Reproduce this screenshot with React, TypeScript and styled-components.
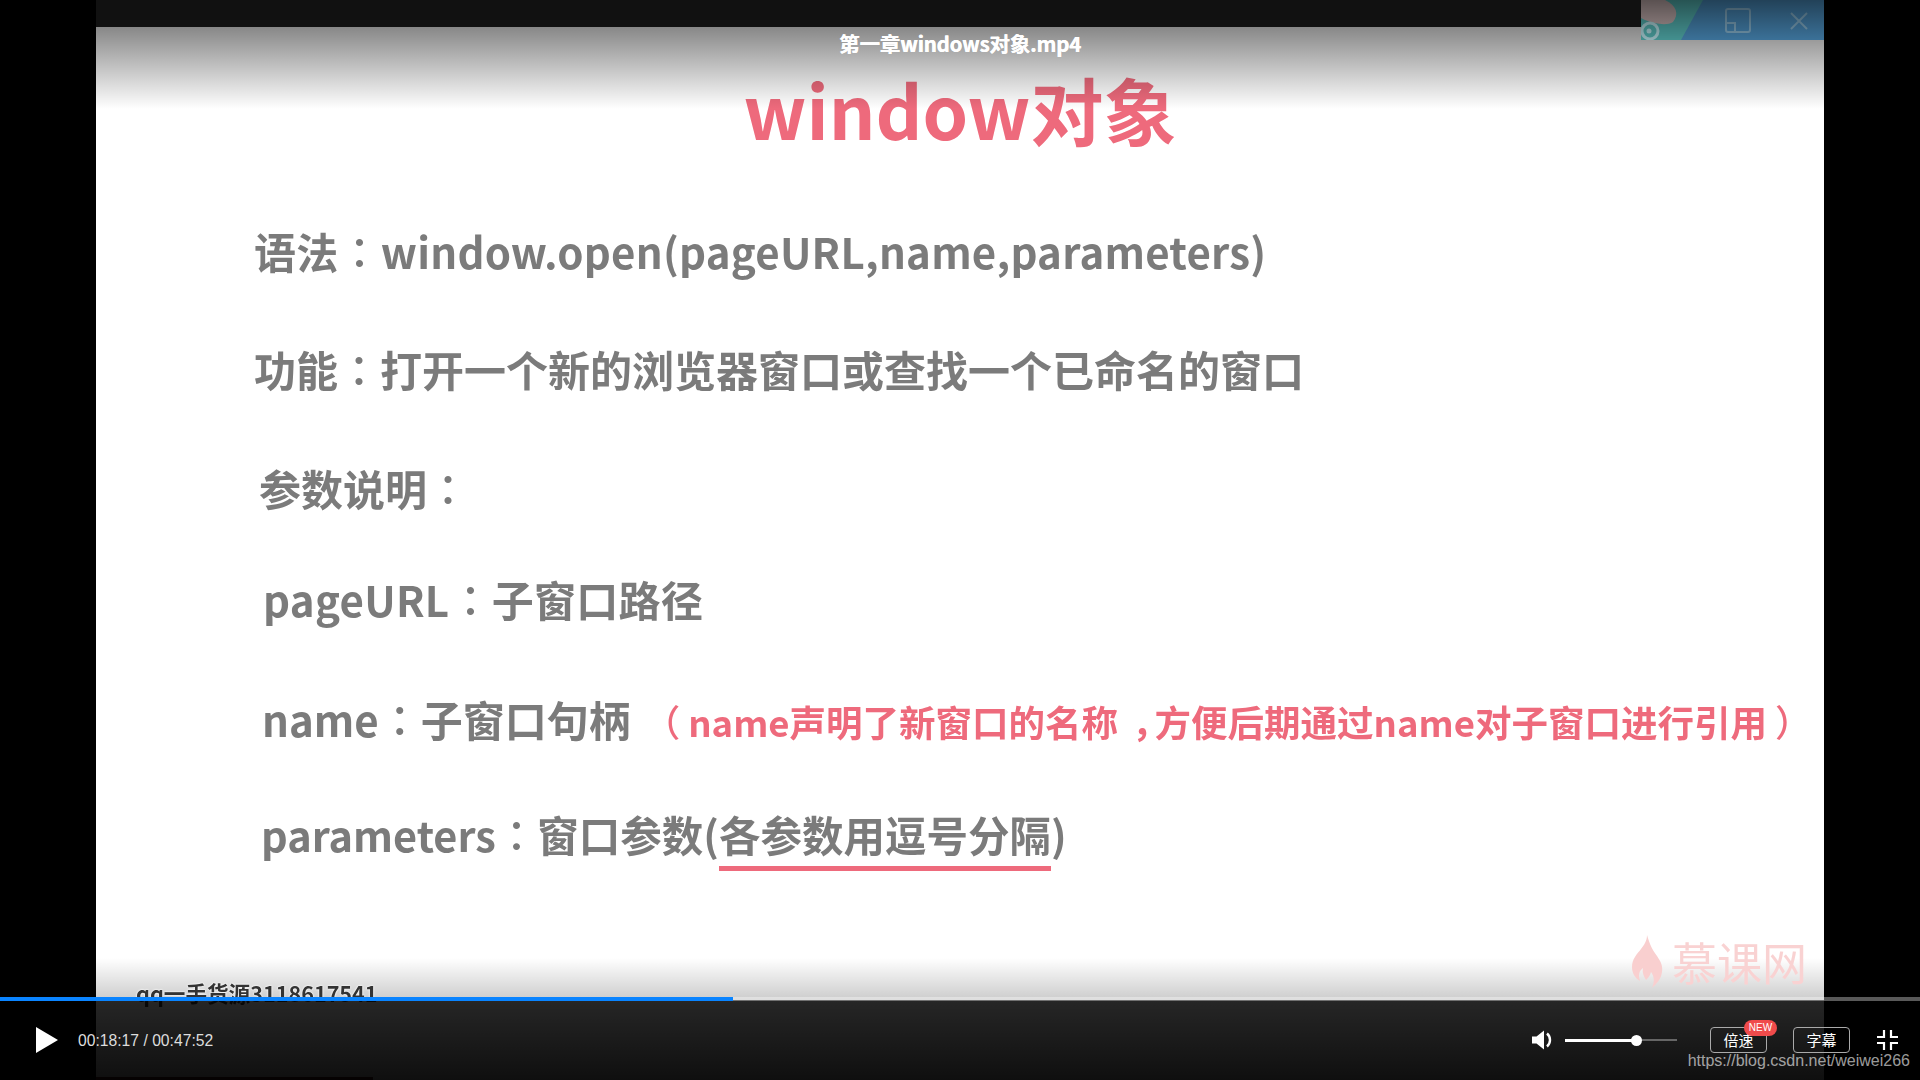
import React from "react";
import styled, { createGlobalStyle } from "styled-components";

const GlobalStyle = createGlobalStyle`
  html, body {
    margin: 0;
    padding: 0;
    background: #000;
  }
  * {
    box-sizing: border-box;
  }
`;

const CJK = `"Noto Sans CJK SC", "Noto Sans", sans-serif`;
const PINK = "#ee6a7c";

const CURRENT_SEC = 18 * 60 + 17;
const TOTAL_SEC = 47 * 60 + 52;
const VOLUME = 0.64;

const Player = styled.div`
  position: relative;
  width: 1920px;
  height: 1080px;
  overflow: hidden;
  background: #000;
  display: flex;
  justify-content: center;
  font-family: ${CJK};
`;

const Slide = styled.main`
  position: relative;
  width: 1728px;
  height: 1080px;
  background: #fff;
  display: flex;
  flex-direction: column;
`;

const TopStrip = styled.div`
  height: 27px;
  flex: none;
  background: #111;
`;

const Content = styled.div`
  flex: 1;
  display: flex;
  flex-direction: column;
  filter: blur(0.55px);
`;

const SlideTitle = styled.h1`
  margin: 46px 0 0;
  font-size: 73px;
  line-height: 70px;
  font-weight: 700;
  color: ${PINK};
  text-align: center;
`;

const Row = styled.div<{
  $indent: number;
  $top: number;
  $size?: number;
  $tracking?: number;
}>`
  margin: ${(p) => p.$top}px 0 0 ${(p) => p.$indent}px;
  height: 60px;
  font-size: ${(p) => p.$size ?? 42}px;
  letter-spacing: ${(p) => p.$tracking ?? 0}px;
  line-height: 60px;
  font-weight: 700;
  color: #7b7b7b;
  white-space: nowrap;
`;

const Punct = styled.span`
  font-family: "Noto Sans CJK TC", sans-serif;
  font-weight: 500;
`;

const Paren = styled(Punct)<{ $side: "open" | "close" }>`
  margin: ${(p) => (p.$side === "open" ? "0 8px 0 0" : "0 0 0 8px")};
`;

const Comma = styled.span`
  padding-left: 14px;
  letter-spacing: -14px;
`;

const Note = styled.span`
  margin-left: 13px;
  font-size: 36.5px;
  color: ${PINK};
`;

const Marked = styled.span`
  padding-bottom: 2px;
  border-bottom: 5px solid ${PINK};
`;

const TopShade = styled.div`
  position: absolute;
  left: 0;
  right: 0;
  top: 27px;
  height: 82px;
  background: linear-gradient(rgba(0, 0, 0, 0.47), rgba(0, 0, 0, 0));
`;

const BottomShade = styled.div`
  position: absolute;
  left: 0;
  right: 0;
  top: 958px;
  height: 42px;
  background: linear-gradient(rgba(0, 0, 0, 0), rgba(0, 0, 0, 0.2));
`;

const VideoTitle = styled.div`
  position: absolute;
  left: 0;
  right: 0;
  top: 29px;
  text-align: center;
  font-size: 20.5px;
  line-height: 28px;
  font-weight: 700;
  letter-spacing: -0.2px;
  color: #fff;
  text-shadow: 0.4px 0 #fff;
`;

const WindowChrome = styled.div`
  position: absolute;
  top: 0;
  right: 0;
  width: 183px;
  height: 40px;
`;

const QqMark = styled.div`
  position: absolute;
  left: 40px;
  top: 978px;
  font-size: 21.6px;
  line-height: 30px;
  font-weight: 700;
  color: #333;
  white-space: nowrap;
  text-shadow: 0 0 2px #fff, 0 0 2px #fff;
  filter: blur(0.5px);
`;

const BrandMark = styled.div`
  position: absolute;
  right: 17px;
  top: 935px;
  display: flex;
  align-items: center;
  gap: 9px;
  filter: blur(0.6px);
`;

const BrandText = styled.span`
  font-size: 45px;
  line-height: 53px;
  color: #f9d2d2;
  white-space: nowrap;
`;

const StripeEdge = styled.div`
  position: absolute;
  left: 0;
  bottom: 0;
  width: 277px;
  height: 3px;
  background: #5a1a1a;
`;

const ControlBar = styled.footer`
  position: absolute;
  left: 0;
  right: 0;
  bottom: 0;
  height: 80px;
  display: flex;
  align-items: center;
  justify-content: space-between;
  padding: 0 22px 0 36px;
  background: linear-gradient(rgba(0, 0, 0, 0.85), rgba(0, 0, 0, 0.94));
`;

const Track = styled.div`
  position: absolute;
  left: 0;
  right: 0;
  top: -3px;
  height: 4px;
  background: rgba(255, 255, 255, 0.35);
`;

const Played = styled.div`
  height: 100%;
  background: #0a84ff;
`;

const LeftControls = styled.div`
  display: flex;
  align-items: center;
  gap: 20px;
`;

const RightControls = styled.div`
  display: flex;
  align-items: center;
`;

const IconButton = styled.button`
  display: flex;
  padding: 0;
  border: 0;
  background: none;
  cursor: pointer;
`;

const TimeText = styled.span`
  position: relative;
  top: 1px;
  font-family: "Liberation Sans", Arial, sans-serif;
  font-size: 15.7px;
  color: #ddd;
  white-space: nowrap;
`;

const VolumeSlider = styled.div`
  position: relative;
  width: 112px;
  height: 2px;
  margin: 0 33px 0 12px;
  background: #666;
`;

const VolumeFill = styled.div`
  position: relative;
  height: 3px;
  top: -0.5px;
  background: #fff;

  &::after {
    content: "";
    position: absolute;
    right: -5px;
    top: -4px;
    width: 11px;
    height: 11px;
    border-radius: 50%;
    background: #fff;
  }
`;

const PillGroup = styled.div`
  display: flex;
  gap: 26px;
  margin-right: 27px;
`;

const PillButton = styled.button`
  position: relative;
  width: 57px;
  height: 26px;
  padding: 0;
  border: 1px solid #aaa;
  border-radius: 4px;
  background: none;
  color: #fff;
  font-family: ${CJK};
  font-size: 15px;
  line-height: 22px;
  cursor: pointer;
`;

const NewBadge = styled.span`
  position: absolute;
  right: -11px;
  top: -8px;
  width: 33px;
  height: 16px;
  border-radius: 8px;
  background: #f04b4b;
  color: #fff;
  font-family: "Liberation Sans", Arial, sans-serif;
  font-size: 10px;
  line-height: 16px;
  text-align: center;
`;

const UrlMark = styled.div`
  position: absolute;
  right: 10px;
  top: 1051px;
  font-family: "Liberation Sans", Arial, sans-serif;
  font-size: 16px;
  line-height: 20px;
  color: rgba(255, 255, 255, 0.62);
  white-space: nowrap;
`;

const ChromeArt = () => (
  <svg width="183" height="40" viewBox="0 0 183 40">
    <defs>
      <linearGradient id="chromeDim" x1="0" y1="0" x2="0" y2="1">
        <stop offset="0" stopColor="#000" stopOpacity="0.42" />
        <stop offset="1" stopColor="#000" stopOpacity="0" />
      </linearGradient>
    </defs>
    <rect width="183" height="40" fill="#3b7198" />
    <path d="M0 0H62L40 40H0Z" fill="#43908f" />
    <path d="M0 0H24C36 6 38 14 32 22C26 26 14 24 4 20L0 18Z" fill="#9c8c8c" />
    <circle cx="9" cy="31" r="8" fill="none" stroke="#8fb0b5" strokeWidth="3" />
    <circle cx="8" cy="31" r="2.5" fill="#8fb0b5" />
    <g fill="none" stroke="#6b8fa4" strokeWidth="2">
      <rect x="85" y="9" width="24" height="23" rx="2" />
      <path d="M85 23H94V32" />
      <path d="M150 13L166 29M166 13L150 29" />
    </g>
    <rect width="183" height="40" fill="url(#chromeDim)" />
  </svg>
);

const Flame = () => (
  <svg width="31" height="53" viewBox="0 0 31 53">
    <path
      d="M15 0C18 10 20 14 25 21C29 27 31 31 30 37C29 45 24 49 20 53C23 46 22 41 19 37C18 41 16 43 14 45C12 41 10 38 11 33C7 36 6 40 8 46C3 43 0 38 0 32C0 24 5 19 9 14C12 10 15 6 15 0Z"
      fill="#f9cfcf"
    />
  </svg>
);

const PlayIcon = () => (
  <svg width="22" height="26" viewBox="0 0 22 26">
    <path d="M0 0L22 13L0 26Z" fill="#fff" />
  </svg>
);

const VolumeIcon = () => (
  <svg width="21" height="20" viewBox="0 0 21 20">
    <path d="M0 6.5H4.5L12 0.5V19.5L4.5 13.5H0Z" fill="#fff" />
    <path d="M15 3.5C19 7 19 13 15 16.5" fill="none" stroke="#fff" strokeWidth="2.4" />
  </svg>
);

const ExitFullscreenIcon = () => (
  <svg width="21" height="20" viewBox="0 0 21 20">
    <path
      d="M7 0V7H0M14 0V7H21M7 20V13H0M14 20V13H21"
      fill="none"
      stroke="#fff"
      strokeWidth="2.2"
    />
  </svg>
);

const Colon = () => <Punct>：</Punct>;

const App = () => {
  const played = (CURRENT_SEC / TOTAL_SEC) * 100;

  return (
    <Player>
      <GlobalStyle />
      <Slide>
        <TopStrip />
        <Content>
          <SlideTitle>window对象</SlideTitle>
          <Row $indent={158} $top={78} $tracking={0.24}>
            语法<Colon />window.open(pageURL,name,parameters)
          </Row>
          <Row $indent={158} $top={58}>
            功能<Colon />打开一个新的浏览器窗口或查找一个已命名的窗口
          </Row>
          <Row $indent={163} $top={59}>
            参数说明<Colon />
          </Row>
          <Row $indent={167} $top={51} $tracking={0.3}>
            pageURL<Colon />子窗口路径
          </Row>
          <Row $indent={166} $top={60}>
            name<Colon />子窗口句柄
            <Note>
              <Paren $side="open">（</Paren>name声明了新窗口的名称<Comma>，</Comma>
              方便后期通过name对子窗口进行引用<Paren $side="close">）</Paren>
            </Note>
          </Row>
          <Row $indent={165} $top={55} $size={41.5}>
            parameters<Colon />窗口参数(<Marked>各参数用逗号分隔</Marked>)
          </Row>
        </Content>
        <TopShade />
        <BottomShade />
        <VideoTitle>第一章windows对象.mp4</VideoTitle>
        <WindowChrome>
          <ChromeArt />
        </WindowChrome>
        <QqMark>qq一手货源3118617541</QqMark>
        <BrandMark>
          <Flame />
          <BrandText>慕课网</BrandText>
        </BrandMark>
        <StripeEdge />
      </Slide>
      <ControlBar>
        <Track>
          <Played style={{ width: `${played}%` }} />
        </Track>
        <LeftControls>
          <IconButton aria-label="play">
            <PlayIcon />
          </IconButton>
          <TimeText>00:18:17 / 00:47:52</TimeText>
        </LeftControls>
        <RightControls>
          <IconButton aria-label="volume">
            <VolumeIcon />
          </IconButton>
          <VolumeSlider>
            <VolumeFill style={{ width: `${VOLUME * 100}%` }} />
          </VolumeSlider>
          <PillGroup>
            <PillButton>
              倍速
              <NewBadge>NEW</NewBadge>
            </PillButton>
            <PillButton>字幕</PillButton>
          </PillGroup>
          <IconButton aria-label="exit fullscreen">
            <ExitFullscreenIcon />
          </IconButton>
        </RightControls>
      </ControlBar>
      <UrlMark>https://blog.csdn.net/weiwei266</UrlMark>
    </Player>
  );
};

export default App;
